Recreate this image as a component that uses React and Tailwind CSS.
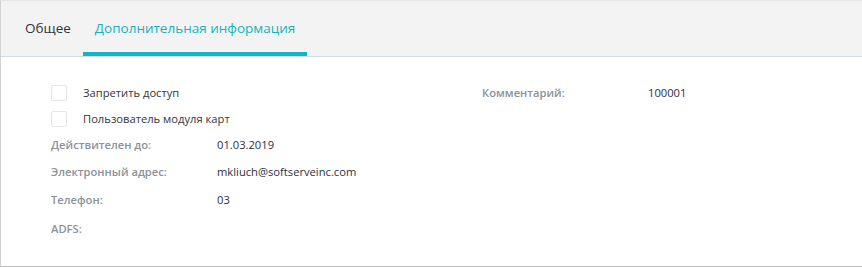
import React from "react"

const font = { fontFamily: '"Open Sans", "Noto Sans", sans-serif' }

function Checkbox({ label }) {
  return (
    <div className="flex h-[26px] items-center">
      <span className="h-4 w-4 rounded-[2px] border border-[#e3e6e8] bg-white" />
      <span className="ml-4 text-[11.2px] text-[#33363d]">{label}</span>
    </div>
  )
}

function Field({ label, value, h = "h-[26px]" }) {
  return (
    <div className={`flex items-center ${h}`}>
      <span className="w-[166px] shrink-0 text-[11.2px] font-semibold text-[#8b9299]">{label}</span>
      <span className="text-[11.2px] text-[#2e2e45]">{value}</span>
    </div>
  )
}

export default function App() {
  return (
    <div
      className="h-[267px] w-[862px] overflow-hidden border-t border-b border-l border-t-[#e6e6e6] border-b-[#bdbdbd] border-l-[#d2d2d2] bg-white"
      style={font}
    >
      <div className="flex h-[56px] items-stretch border-b border-[#d3dbe0] bg-[#f3f3f3] pl-3">
        <div className="flex items-center border-b-4 border-transparent px-3 pt-1 text-[13.5px] text-[#2f333a]">
          Общее
        </div>
        <div className="flex items-center border-b-4 border-[#12b5c1] px-3 pt-1 text-[13.5px] text-[#17b2c0]">
          Дополнительная информация
        </div>
      </div>

      <div className="grid grid-cols-[431px_1fr] pl-[50px] pt-[23px]">
        <div className="flex flex-col">
          <Checkbox label="Запретить доступ" />
          <Checkbox label="Пользователь модуля карт" />
          <Field label="Действителен до:" value="01.03.2019" />
          <Field label="Электронный адрес:" value="mkliuch@softserveinc.com" h="h-[28px]" />
          <Field label="Телефон:" value="03" h="h-[28px]" />
          <Field label="ADFS:" value="" h="h-[30px]" />
        </div>
        <div className="flex flex-col">
          <Field label="Комментарий:" value="100001" />
        </div>
      </div>
    </div>
  )
}
